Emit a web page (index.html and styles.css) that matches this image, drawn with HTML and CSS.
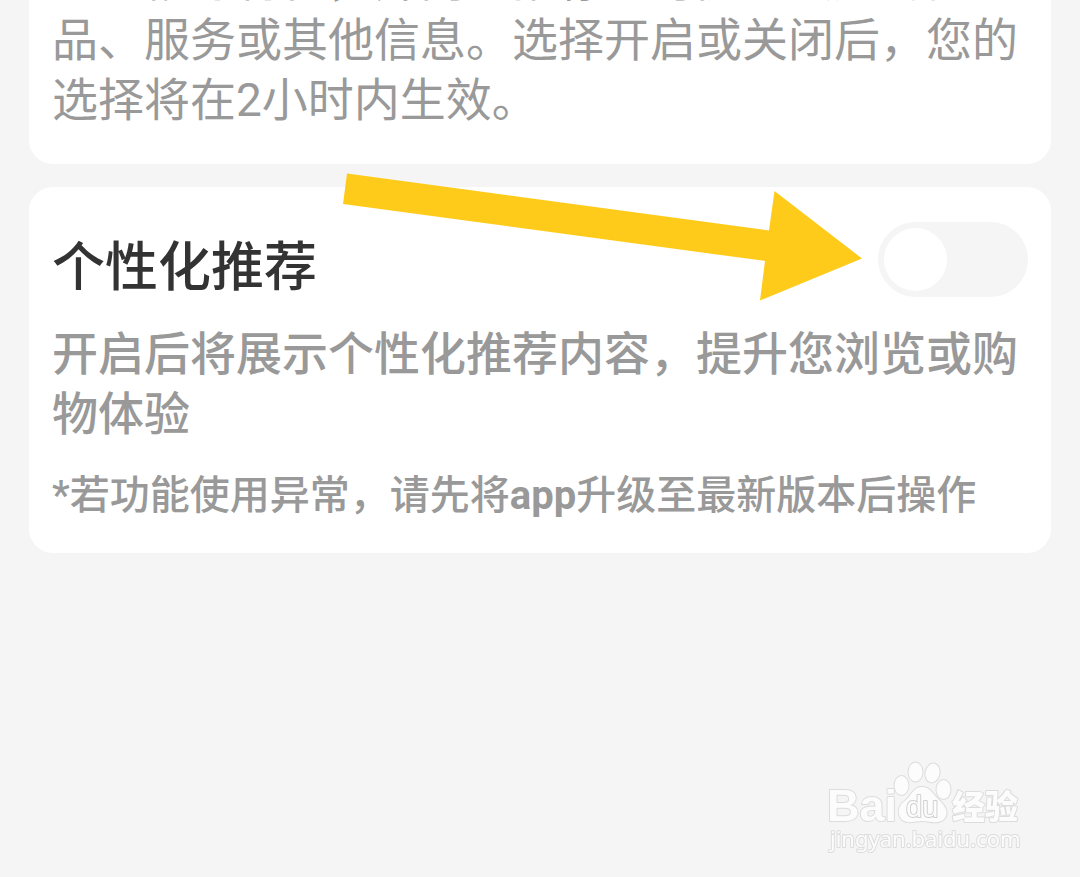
FILE: index.html
```html
<!DOCTYPE html>
<html lang="zh-CN">
<head>
<meta charset="utf-8">
<meta name="viewport" content="width=device-width, initial-scale=1">
<title>个性化推荐</title>
<link rel="stylesheet" href="styles.css">
</head>
<body>
<main class="page">
  <section class="card card-ads">
    <p class="desc">息、偏好特征，并向您推荐您可能感兴趣的商品、服务或其他信息。选择开启或关闭后，您的选择将在2小时内生效。</p>
  </section>
  <section class="card card-recommend">
    <div class="row">
      <label class="title" for="recommend">个性化推荐</label>
      <input class="switch" id="recommend" type="checkbox" role="switch">
    </div>
    <p class="desc desc-medium">开启后将展示个性化推荐内容，提升您浏览或购物体验</p>
    <p class="note">*若功能使用异常，请先将<b class="latin">app</b>升级至最新版本后操作</p>
    <svg class="arrow" viewBox="343 173 520 128" aria-hidden="true">
      <path d="M347 173.500 L769 230.500 L774.500 191 L862 258.500 L760 300.500 L765 261 L343 204Z"/>
    </svg>
  </section>
</main>
<svg class="watermark" viewBox="0 0 230 120" role="img" aria-label="Baidu 经验">
  <g class="mark">
    <text class="wm-brand" x="17" y="71">Bai</text>
    <ellipse cx="91.500" cy="35.500" rx="7" ry="9.500"/>
    <ellipse cx="105.500" cy="22" rx="7" ry="9.500"/>
    <ellipse cx="122.500" cy="23" rx="7" ry="9.500" transform="rotate(12 122.500 23)"/>
    <ellipse cx="133.500" cy="39.500" rx="7" ry="9.500"/>
    <path d="M112 37 C104 37 102 44 96 50 C90 54 88 59 89 64 C91 73 99 73 106 71.500 Q112 70.500 118 71.500 C127 73.500 135 72 136.500 64 C137 58 133 54 128 49 C122 43 120 37 112 37Z"/>
    <text class="wm-du" x="96" y="67">du</text>
    <text class="wm-cjk" x="142" y="69">经验</text>
    <text class="wm-url" x="20" y="97">jingyan.baidu.com</text>
  </g>
</svg>
</body>
</html>
```
FILE: styles.css
```css
* { box-sizing: border-box; }

body {
  margin: 0;
  min-height: 100vh;
  overflow: hidden;
  background: #f5f5f5;
  color: #999;
  font-family: Roboto, "Noto Sans CJK SC", sans-serif;
}

.page {
  display: flex;
  flex-direction: column;
  gap: 23px;
  padding: 0 29px;
}

.card {
  position: relative;
  padding: 0 23px;
  border-radius: 24px;
  background: #fff;
}

.card-ads {
  margin-top: -50px;
  padding-bottom: 34px;
}

.card-recommend {
  padding-top: 35px;
  padding-bottom: 32px;
}

.desc, .note { margin: 0; }

.desc {
  font-size: 46px;
  line-height: 60px;
}

.desc-medium {
  margin-top: 26px;
  font-weight: 500;
}

.note {
  margin-top: 27px;
  font-size: 40px;
  font-weight: 500;
  line-height: 50px;
}

.latin { font-weight: 700; }

.row {
  display: flex;
  align-items: flex-start;
  justify-content: space-between;
}

.title {
  padding-top: 16px;
  color: #333;
  font-size: 53px;
  font-weight: 500;
  line-height: 60px;
}

.switch {
  appearance: none;
  display: flex;
  align-items: center;
  width: 150px;
  height: 75px;
  margin: 0;
  padding: 6px;
  border-radius: 38px;
  background: #f5f5f5;
}

.switch::before {
  content: "";
  width: 63px;
  height: 63px;
  border-radius: 50%;
  background: #fff;
}

.switch:checked {
  justify-content: flex-end;
  background: #fa2c19;
}

.arrow {
  position: absolute;
  top: -14px;
  left: 314px;
  width: 520px;
  fill: #ffcb1b;
  pointer-events: none;
}

.watermark {
  position: fixed;
  right: 40px;
  bottom: 7px;
  width: 230px;
  height: 120px;
}

.mark {
  fill: #fcfcfc;
  stroke: #dcdcdc;
  stroke-width: 2px;
  stroke-linejoin: round;
  paint-order: stroke;
}

.wm-brand { font: 700 45px "Liberation Sans", sans-serif; }
.wm-du { font: 400 29px "Liberation Sans", sans-serif; stroke: #d0d0d0; }
.wm-cjk { font: 900 33px "Noto Sans CJK SC", sans-serif; }
.wm-url { font: 400 22px "Noto Sans", sans-serif; }
```
